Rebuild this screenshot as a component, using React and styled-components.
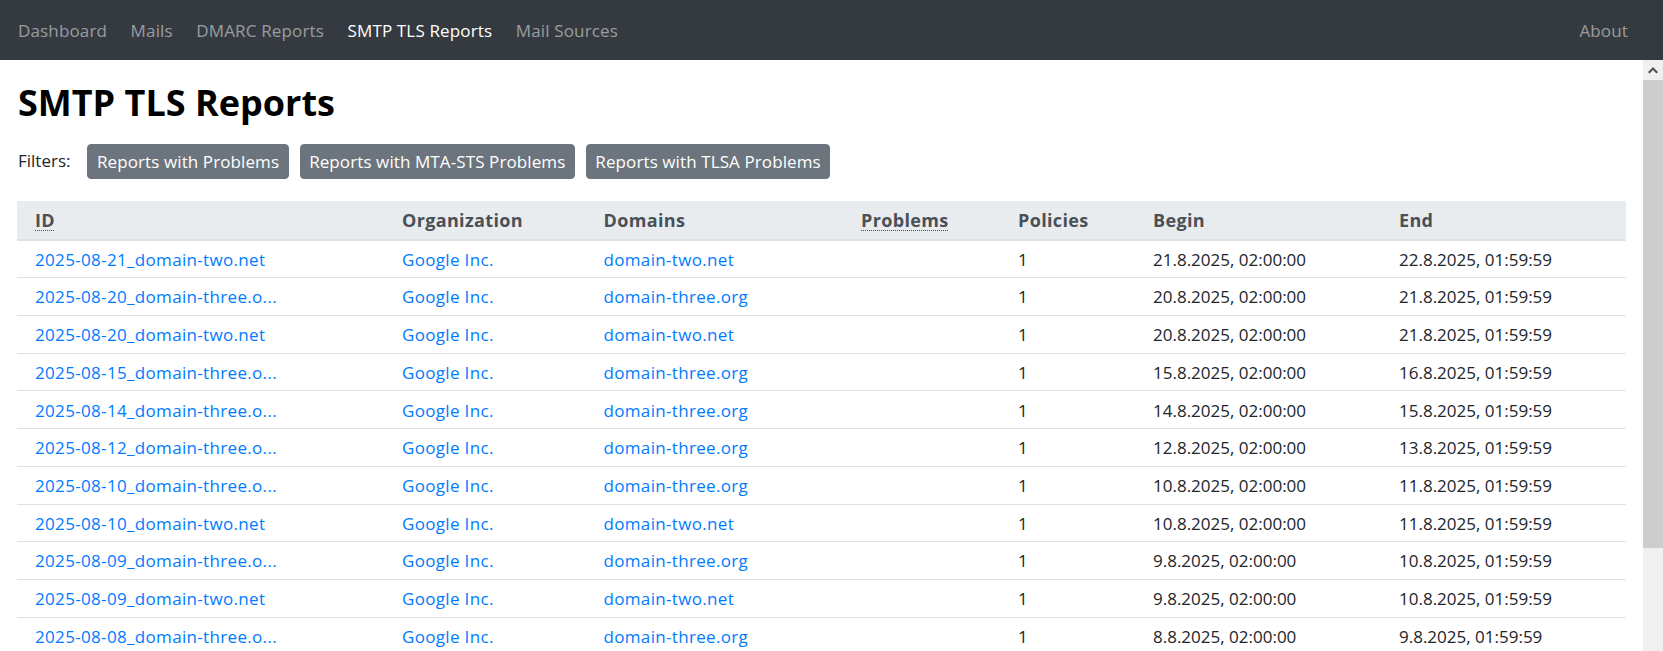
import React from "react";
import styled, { createGlobalStyle } from "styled-components";

const GlobalStyle = createGlobalStyle`
  html, body {
    margin: 0;
    padding: 0;
    height: 100%;
    overflow: hidden;
    background: #fff;
  }
  body {
    font-family: "Open Sans", "Noto Sans", "Liberation Sans", sans-serif;
    font-size: 17px;
    line-height: 1.5;
    color: #212529;
  }
  #root { height: 100%; }
  * { box-sizing: border-box; }
`;

const Page = styled.div`
  display: flex;
  flex-direction: column;
  height: 100vh;
`;

const NavBar = styled.nav`
  flex: 0 0 60px;
  height: 60px;
  background: #343a40;
  display: flex;
  align-items: center;
  padding: 0 35px 0 18px;
  gap: 23.5px;
`;

const NavLink = styled.a`
  font-size: 17px;
  line-height: 25px;
  letter-spacing: 0.15px;
  text-decoration: none;
  color: ${(p) => (p.$active ? "#ffffff" : "rgba(255,255,255,0.5)")};
  margin-left: ${(p) => (p.$right ? "auto" : "0")};
  white-space: nowrap;
`;

const Body = styled.div`
  flex: 1;
  display: flex;
  min-height: 0;
`;

const Main = styled.main`
  flex: 1;
  min-width: 0;
  overflow: hidden;
  padding: 21px 17px 0 17px;
`;

const Title = styled.h2`
  margin: 0;
  font-size: 36px;
  font-weight: 700;
  line-height: 1.2;
  color: #000;
  padding-left: 1px;
`;

const FilterRow = styled.div`
  display: flex;
  align-items: center;
  margin-top: 19.5px;
  padding-left: 1px;
`;

const FilterLabel = styled.span`
  margin-right: 17px;
`;

const FilterButton = styled.button`
  font-family: inherit;
  font-size: 17px;
  line-height: 25.5px;
  letter-spacing: 0.1px;
  padding: 4.25px 8.5px 3.25px;
  border: 1px solid #6c757d;
  border-radius: 4px;
  background: #6c757d;
  color: #fff;
  margin-right: 11px;
  cursor: pointer;
`;

const Table = styled.table`
  width: 100%;
  margin-top: 22px;
  border-collapse: collapse;
  table-layout: fixed;
`;

const Col = styled.col`
  width: ${(p) => p.$w}px;
`;

const HeadCell = styled.th`
  background: #e9ecef;
  color: #495057;
  font-size: 18px;
  letter-spacing: 0.35px;
  font-weight: 700;
  line-height: 25.5px;
  text-align: left;
  padding: 7.5px 17px 5px 18px;
  border-bottom: 2px solid #dee2e6;
  white-space: nowrap;
`;

const Abbr = styled.abbr`
  text-decoration: underline dotted;
  text-underline-offset: 3px;
  text-decoration-thickness: 1px;
  cursor: help;
`;

const Cell = styled.td`
  padding: 6.1px 17px 5.1px 18px;
  border-bottom: 1px solid #dee2e6;
  white-space: nowrap;
  overflow: hidden;
  color: #212529;
`;

const Link = styled.a`
  color: #007bff;
  letter-spacing: 0.33px;
  text-decoration: none;
`;

const ScrollBar = styled.div`
  flex: 0 0 20px;
  width: 20px;
  display: flex;
  flex-direction: column;
  background: #f0f0f0;
`;

const ScrollArrow = styled.div`
  height: 20px;
  display: flex;
  align-items: center;
  justify-content: center;
  background: #f0f0f0;
`;

const ScrollThumb = styled.div`
  height: 468px;
  background: #cdcdcd;
`;

const columns = [
  { key: "id", label: "ID", w: 367, abbr: true },
  { key: "org", label: "Organization", w: 201.5 },
  { key: "dom", label: "Domains", w: 257.5 },
  { key: "prob", label: "Problems", w: 157, abbr: true },
  { key: "pol", label: "Policies", w: 135 },
  { key: "begin", label: "Begin", w: 246 },
  { key: "end", label: "End", w: 245 },
];

const rows = [
  ["2025-08-21_domain-two.net", "domain-two.net", "21.8.2025, 02:00:00", "22.8.2025, 01:59:59"],
  ["2025-08-20_domain-three.o...", "domain-three.org", "20.8.2025, 02:00:00", "21.8.2025, 01:59:59"],
  ["2025-08-20_domain-two.net", "domain-two.net", "20.8.2025, 02:00:00", "21.8.2025, 01:59:59"],
  ["2025-08-15_domain-three.o...", "domain-three.org", "15.8.2025, 02:00:00", "16.8.2025, 01:59:59"],
  ["2025-08-14_domain-three.o...", "domain-three.org", "14.8.2025, 02:00:00", "15.8.2025, 01:59:59"],
  ["2025-08-12_domain-three.o...", "domain-three.org", "12.8.2025, 02:00:00", "13.8.2025, 01:59:59"],
  ["2025-08-10_domain-three.o...", "domain-three.org", "10.8.2025, 02:00:00", "11.8.2025, 01:59:59"],
  ["2025-08-10_domain-two.net", "domain-two.net", "10.8.2025, 02:00:00", "11.8.2025, 01:59:59"],
  ["2025-08-09_domain-three.o...", "domain-three.org", "9.8.2025, 02:00:00", "10.8.2025, 01:59:59"],
  ["2025-08-09_domain-two.net", "domain-two.net", "9.8.2025, 02:00:00", "10.8.2025, 01:59:59"],
  ["2025-08-08_domain-three.o...", "domain-three.org", "8.8.2025, 02:00:00", "9.8.2025, 01:59:59"],
  ["2025-08-08_domain-two.net", "domain-two.net", "8.8.2025, 02:00:00", "9.8.2025, 01:59:59"],
  ["2025-08-07_domain-three.o...", "domain-three.org", "7.8.2025, 02:00:00", "8.8.2025, 01:59:59"],
];

export default function App() {
  return (
    <>
      <GlobalStyle />
      <Page>
        <NavBar>
          <NavLink href="#">Dashboard</NavLink>
          <NavLink href="#">Mails</NavLink>
          <NavLink href="#">DMARC Reports</NavLink>
          <NavLink href="#" $active>SMTP TLS Reports</NavLink>
          <NavLink href="#">Mail Sources</NavLink>
          <NavLink href="#" $right>About</NavLink>
        </NavBar>
        <Body>
          <Main>
            <Title>SMTP TLS Reports</Title>
            <FilterRow>
              <FilterLabel>Filters:</FilterLabel>
              <FilterButton>Reports with Problems</FilterButton>
              <FilterButton>Reports with MTA-STS Problems</FilterButton>
              <FilterButton>Reports with TLSA Problems</FilterButton>
            </FilterRow>
            <Table>
              <colgroup>
                {columns.map((c) => (
                  <Col key={c.key} $w={c.w} />
                ))}
              </colgroup>
              <thead>
                <tr>
                  {columns.map((c) => (
                    <HeadCell key={c.key}>
                      {c.abbr ? <Abbr title={c.label}>{c.label}</Abbr> : c.label}
                    </HeadCell>
                  ))}
                </tr>
              </thead>
              <tbody>
                {rows.map((r) => (
                  <tr key={r[0] + r[2]}>
                    <Cell><Link href="#">{r[0]}</Link></Cell>
                    <Cell><Link href="#">Google Inc.</Link></Cell>
                    <Cell><Link href="#">{r[1]}</Link></Cell>
                    <Cell></Cell>
                    <Cell>1</Cell>
                    <Cell>{r[2]}</Cell>
                    <Cell>{r[3]}</Cell>
                  </tr>
                ))}
              </tbody>
            </Table>
          </Main>
          <ScrollBar>
            <ScrollArrow>
              <svg width="10" height="7" viewBox="0 0 10 7">
                <polygon points="0,5 5,0 10,5 8.5,6.5 5,3 1.5,6.5" fill="#505050" />
              </svg>
            </ScrollArrow>
            <ScrollThumb />
          </ScrollBar>
        </Body>
      </Page>
    </>
  );
}
